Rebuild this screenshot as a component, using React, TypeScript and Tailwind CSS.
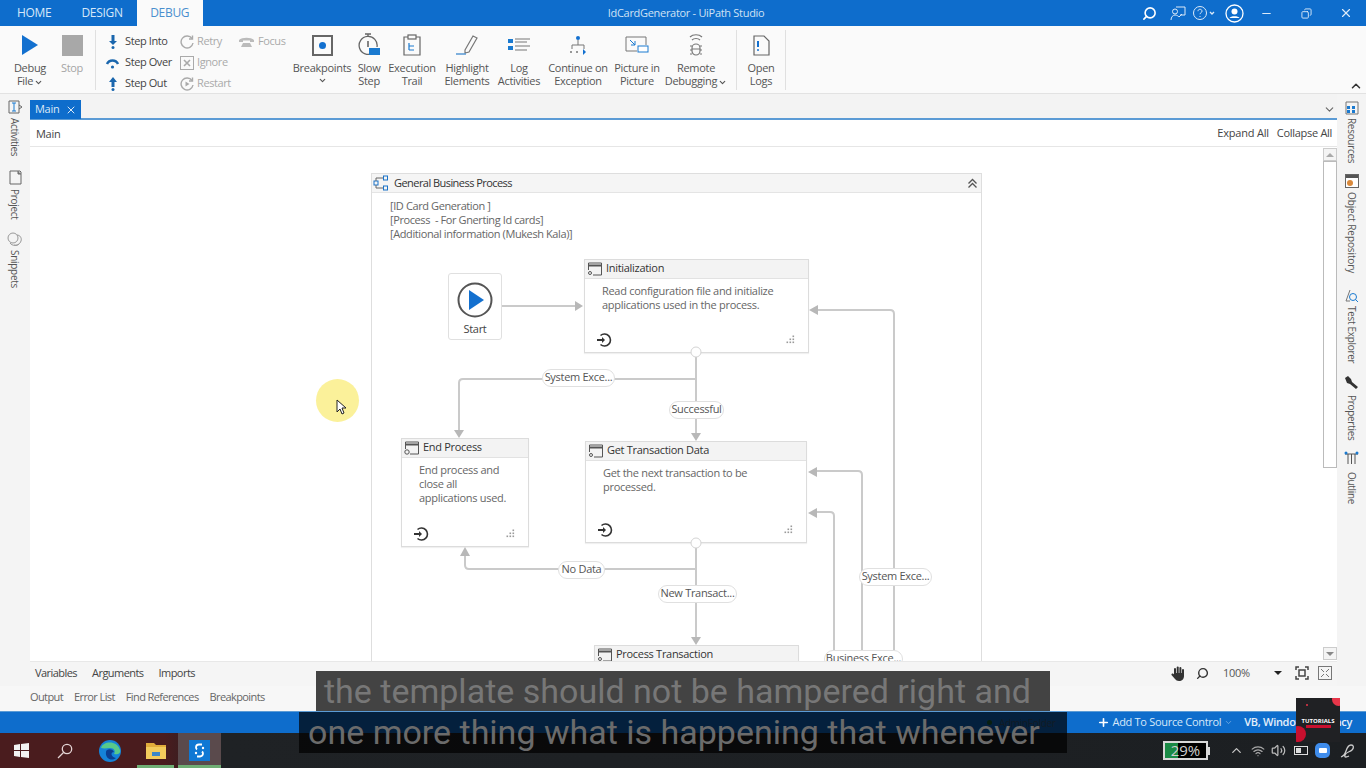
import { ChevronDown, ChevronUp, Minus, X, Plus, Search, Copy, Wifi, Volume2 } from "lucide-react";
import type { ReactNode } from "react";

const LABEL = "text-[11px] leading-[13px] text-[#555] text-center";

function BigButton({ w, icon, lines, caret, muted, caretBelow }: { w: string; icon: ReactNode; lines: string[]; caret?: boolean; muted?: boolean; caretBelow?: boolean }) {
  return (
    <div className={`${w} flex flex-col items-center shrink-0`}>
      <div className="h-[30px] w-full flex items-center justify-center">{icon}</div>
      <div className={`${LABEL} mt-[1px] ${muted ? "text-[#a5a5a5]" : ""}`}>
        {lines.map((l, i) => (
          <div key={i} className="whitespace-nowrap">
            {l}
            {caret && i === lines.length - 1 && <ChevronDown className="inline w-[9px] h-[9px] ml-[1px]" strokeWidth={3} />}
          </div>
        ))}
        {caretBelow && <ChevronDown className="mx-auto mt-[2px] w-[9px] h-[9px]" strokeWidth={3} />}
      </div>
    </div>
  );
}

function StepRow({ icon, label, muted }: { icon: ReactNode; label: string; muted?: boolean }) {
  return (
    <div className={`h-[21px] flex items-center whitespace-nowrap ${muted ? "gap-[3px]" : "gap-[5px]"}`}>
      <span className="w-[15px] h-[15px] flex items-center justify-center shrink-0">{icon}</span>
      <span className={`text-[11px] tracking-[-0.4px] ${muted ? "text-[#aaa]" : "text-[#444]"}`}>{label}</span>
    </div>
  );
}

function RailItem({ icon, label, className, gap }: { icon: ReactNode; label: string; className: string; gap: string }) {
  return (
    <div className={`flex flex-col items-center shrink-0 ${className}`}>
      {icon}
      <span className={`[writing-mode:vertical-rl] text-[10px] leading-[12px] text-[#555] ${gap} whitespace-nowrap`}>{label}</span>
    </div>
  );
}

function StateIcon({ dot }: { dot?: "key" | "ring" }) {
  return (
    <svg width="16" height="14" viewBox="0 0 16 14" fill="none" stroke="#555" className="shrink-0">
      <path d="M1.5 8V1h13v12H6" />
      <path d="M1 3.5h14" strokeWidth="2" />
      <circle cx="3" cy="11" r={dot === "ring" ? 2.2 : 1.5} />
    </svg>
  );
}

function EntryIcon() {
  return (
    <svg width="18" height="16" viewBox="0 0 18 16" fill="none" stroke="#333" strokeWidth="1.6">
      <path d="M4.5 3.5a6 6 0 1 1 0 9" />
      <path d="M1 8h6" strokeWidth="2" />
      <path d="M6 5l3 3-3 3z" fill="#333" stroke="none" />
    </svg>
  );
}

function GripIcon() {
  return (
    <svg width="10" height="10" viewBox="0 0 10 10" fill="#9a9a9a">
      <rect x="7.5" y="0.5" width="1.6" height="1.6" />
      <rect x="7.5" y="3.5" width="1.6" height="1.6" />
      <rect x="4.5" y="3.5" width="1.6" height="1.6" />
      <rect x="7.5" y="6.5" width="1.6" height="1.6" />
      <rect x="4.5" y="6.5" width="1.6" height="1.6" />
      <rect x="1.5" y="6.5" width="1.6" height="1.6" />
    </svg>
  );
}

function StateNode({ className, title, desc, dot }: { className: string; title: string; desc?: string[]; dot?: "key" | "ring" }) {
  return (
    <div className={`absolute bg-white border border-[#dcdcdc] shadow-[0_1px_1px_rgba(0,0,0,0.06)] flex flex-col ${className}`}>
      <div className="h-[19px] shrink-0 bg-[#f3f3f3] border-b border-[#e2e2e2] flex items-center gap-[3px] px-[2px] pb-[1px]">
        <StateIcon dot={dot} />
        <span className="text-[11px] text-[#333] whitespace-nowrap">{title}</span>
      </div>
      {desc && (
        <>
          <div className="pt-[5px] pl-[17px] text-[11px] leading-[14px] text-[#666]">
            {desc.map((d) => (
              <div key={d} className="whitespace-nowrap">{d}</div>
            ))}
          </div>
          <div className="mt-auto flex items-center justify-between pl-[11px] pr-[13px] pb-[4px]">
            <EntryIcon />
            <GripIcon />
          </div>
        </>
      )}
    </div>
  );
}

function Pill({ className, label }: { className: string; label: string }) {
  return (
    <div className={`absolute h-[18px] pb-[1px] bg-white border border-[#e0e0e0] rounded-full flex items-center justify-center text-[11px] text-[#555] whitespace-nowrap ${className}`}>
      {label}
    </div>
  );
}

function Connectors() {
  // coordinates are relative to the General Business Process box
  const c = "#cacaca";
  return (
    <svg className="absolute left-0 top-0 w-[610px] h-[490px]" viewBox="0 0 610 490" fill="none">
      <g stroke={c} strokeWidth="2">
        <path d="M131 133H205" />
        <path d="M325 184V262" />
        <path d="M325 206H92q-4 0-4 4V258" />
        <path d="M523 490V141q0-4-4-4H446" />
        <path d="M491 490V302q0-4-4-4H446" />
        <path d="M463 490V343q0-4-4-4H446" />
        <path d="M325 375V466" />
        <path d="M325 396H98q-4 0-4-4V382" />
      </g>
      <g fill="#b8b8b8">
        <path d="M204 128l8 5-8 5z" />
        <path d="M320 260h10l-5 8z" />
        <path d="M83 257h10l-5 8z" />
        <path d="M320 464h10l-5 8z" />
        <path d="M89 383h10l-5-9z" />
        <path d="M447 132l-9 5 9 5z" />
        <path d="M446 294l-9 5 9 5z" />
        <path d="M446 335l-9 5 9 5z" />
      </g>
      <circle cx="325" cy="179" r="5" fill="#fff" stroke="#d4d4d4" />
      <circle cx="325" cy="370" r="5" fill="#fff" stroke="#d4d4d4" />
    </svg>
  );
}

function Diagram() {
  return (
    <div className="relative ml-[341px] mt-[26px] w-[611px] h-[600px] bg-white border border-[#dedede]">
      <div className="h-[19px] bg-[#f5f5f5] border-b border-[#e4e4e4] flex items-center pl-[1px] pr-[3px]">
        <svg width="17" height="16" viewBox="0 0 17 16" fill="none" className="mr-[4px]">
          <rect x="1" y="6" width="4" height="4" stroke="#1a72c8" />
          <rect x="10.5" y="1" width="4" height="4" stroke="#1a72c8" />
          <rect x="10.5" y="11" width="4" height="4" stroke="#1a72c8" />
          <path d="M3 6V3h7M3 10v3h7" stroke="#666" />
        </svg>
        <span className="text-[11px] tracking-[-0.55px] text-[#333]">General Business Process</span>
        <svg width="11" height="11" viewBox="0 0 11 11" fill="none" stroke="#555" strokeWidth="1.3" className="ml-auto">
          <path d="M1.5 5.5l4-4 4 4M1.5 9.5l4-4 4 4" />
        </svg>
      </div>
      <div className="pl-[18px] pt-[6px] text-[11px] leading-[14px] tracking-[-0.4px] text-[#666]">
        <div>[ID Card Generation ]</div>
        <div>[Process&nbsp; - For Gnerting Id cards]</div>
        <div>[Additional information (Mukesh Kala)]</div>
      </div>
      <div className="absolute -left-px -top-px">
        <div className="absolute left-[77px] top-[100px] w-[54px] h-[67px] bg-white border border-[#e0e0e0] rounded-[3px] flex flex-col items-center pt-[8px]">
          <svg width="36" height="36" viewBox="0 0 36 36">
            <circle cx="18" cy="18" r="16.5" fill="#fff" stroke="#555" strokeWidth="2" />
            <path d="M12 8l15 10-15 10z" fill="#1370cf" />
          </svg>
          <span className="text-[11px] text-[#444] mt-[3px]">Start</span>
        </div>
        <StateNode className="left-[213px] top-[86px] w-[225px] h-[94px]" title="Initialization" desc={["Read configuration file and initialize", "applications used in the process."]} />
        <StateNode className="left-[30px] top-[265px] w-[128px] h-[109px]" title="End Process" dot="ring" desc={["End process and", "close all", "applications used."]} />
        <StateNode className="left-[214px] top-[268px] w-[222px] h-[102px]" title="Get Transaction Data" desc={["Get the next transaction to be", "processed."]} />
        <StateNode className="left-[223px] top-[472px] w-[205px] h-[60px]" title="Process Transaction" />
        <Connectors />
        <Pill className="left-[171px] top-[196px] w-[73px]" label="System Exce..." />
        <Pill className="left-[298px] top-[228px] w-[55px]" label="Successful" />
        <Pill className="left-[187px] top-[388px] w-[47px]" label="No Data" />
        <Pill className="left-[287px] top-[412px] w-[79px]" label="New Transact..." />
        <Pill className="left-[488px] top-[395px] w-[73px]" label="System Exce..." />
        <Pill className="left-[453px] top-[477px] w-[79px]" label="Business Exce..." />
      </div>
    </div>
  );
}

function TrayBattery() {
  return (
    <div className="flex items-center mr-[19px]">
      <div className="relative w-[45px] h-[19px] border-2 border-[#d8d8d8] bg-black flex items-center justify-center">
        <div className="absolute left-0 top-0 bottom-0 w-[13px] bg-[#1a8a45]" />
        <span className="relative text-[15px] leading-none tracking-normal text-[#cfcfcf]">29%</span>
      </div>
      <div className="w-[2px] h-[8px] bg-[#d8d8d8]" />
    </div>
  );
}

export default function App() {
  return (
    <div className="relative w-[1366px] h-[768px] overflow-hidden flex flex-col bg-[#f5f5f5] font-['Open_Sans',sans-serif] tracking-[-0.3px]">
      {/* title bar */}
      <div className="h-[26px] shrink-0 bg-[#0e6dcc] flex items-stretch relative">
        <div className="flex items-center text-[12px] text-[#d6e8f9] pl-[17px]">
          <span>HOME</span>
          <span className="ml-[30px]">DESIGN</span>
        </div>
        <div className="ml-[14px] w-[66px] bg-[#fafafa] flex items-center justify-center text-[12px] text-[#4a8fce]">DEBUG</div>
        <div className="ml-[405px] flex items-center text-[11px] text-[#cfe2f5] whitespace-nowrap">IdCardGenerator - UiPath Studio</div>
        <div className="ml-auto flex items-center text-white">
          <Search className="w-[15px] h-[15px] -scale-x-100" strokeWidth={2.6} />
          <svg width="16" height="16" viewBox="0 0 16 16" fill="none" stroke="#dceaf8" className="ml-[13px]">
            <path d="M6 2h9v8H10" />
            <circle cx="5" cy="6.5" r="2.5" />
            <path d="M1 15c0-3 2-5 4-5s3 1 4 2l3-3" />
          </svg>
          <svg width="24" height="16" viewBox="0 0 24 16" fill="none" stroke="#dceaf8" className="ml-[6px]">
            <circle cx="8" cy="8" r="6.5" />
            <path d="M6 6.2c0-2.6 4-2.6 4 0 0 1.5-2 1.5-2 3M8 11v1" />
            <path d="M18 7l2 2 2-2" strokeWidth="1.3" />
          </svg>
          <svg width="19" height="19" viewBox="0 0 19 19" fill="none" className="ml-[9px]">
            <circle cx="9.5" cy="9.5" r="8.5" stroke="#fff" strokeWidth="1.3" />
            <circle cx="9.5" cy="7.5" r="3" fill="#fff" />
            <path d="M4.5 14c1-2.4 9-2.4 10 0z" fill="#fff" />
          </svg>
          <Minus className="w-[13px] h-[13px] ml-[16px] text-[#dceaf8]" />
          <Copy className="w-[11px] h-[11px] ml-[28px] text-[#dceaf8] -scale-x-100" />
          <X className="w-[14px] h-[14px] ml-[27px] mr-[13px] text-[#dceaf8]" />
        </div>
      </div>

      {/* ribbon */}
      <div className="h-[68px] shrink-0 bg-[#fafafa] border-b border-[#e2e2e2] flex items-start pt-[4px]">
        <BigButton w="w-[44px] ml-[8px]" lines={["Debug", "File"]} caret icon={
          <svg width="18" height="20" viewBox="0 0 18 20"><path d="M1 0l16 10L1 20z" fill="#1370cf" /></svg>
        } />
        <BigButton w="w-[36px] ml-[2px]" lines={["Stop"]} muted icon={<div className="w-[21px] h-[21px] bg-[#a8a8a8]" />} />
        <div className="w-px h-[60px] bg-[#e0e0e0] ml-[5px]" />
        <div className="ml-[9px] w-[74px] flex flex-col pt-[1px]">
          <StepRow label="Step Into" icon={<svg width="10" height="14" viewBox="0 0 10 14" fill="#1a66ad"><path d="M3.5 0h3v6H9L5 10 1 6h2.5z" /><circle cx="5" cy="12.5" r="1.5" /></svg>} />
          <StepRow label="Step Over" icon={<svg width="15" height="12" viewBox="0 0 15 12" fill="none"><path d="M2 7a6 6 0 0 1 11 0" stroke="#1a66ad" strokeWidth="2.5" /><circle cx="7.5" cy="10" r="1.6" fill="#1a66ad" /></svg>} />
          <StepRow label="Step Out" icon={<svg width="10" height="14" viewBox="0 0 10 14" fill="#1a66ad"><path d="M3.5 10h3V5H9L5 0 1 5h2.5z" /><circle cx="5" cy="12.5" r="1.5" /></svg>} />
        </div>
        <div className="w-[60px] flex flex-col pt-[1px]">
          <StepRow muted label="Retry" icon={<svg width="14" height="14" viewBox="0 0 14 14" fill="none" stroke="#aaa" strokeWidth="1.4"><path d="M12 3.5A6 6 0 1 0 13 8" /><path d="M12.5 0.5v3.5H9" /></svg>} />
          <StepRow muted label="Ignore" icon={<svg width="14" height="14" viewBox="0 0 14 14" fill="none" stroke="#aaa"><rect x="0.5" y="0.5" width="13" height="13" /><path d="M4 4l6 6M10 4l-6 6" strokeWidth="1.6" /></svg>} />
          <StepRow muted label="Restart" icon={<svg width="14" height="14" viewBox="0 0 14 14" fill="none" stroke="#aaa" strokeWidth="1.4"><path d="M12 3.5A6 6 0 1 0 13 8" /><path d="M12.5 0.5v3.5H9" /><path d="M5.5 4.5l4 2.5-4 2.5z" fill="#aaa" stroke="none" /></svg>} />
        </div>
        <div className="w-[53px] flex flex-col pt-[1px]">
          <div className="h-[21px] flex items-center gap-[4px]">
            <svg width="15" height="10" viewBox="0 0 15 10" fill="#bbb"><path d="M0 3c3-3 12-3 15 0v2h-4V3.500H4V5H0z" /><path d="M4 6h7l2 4H2z" /></svg>
            <span className="text-[11px] tracking-[-0.4px] text-[#aaa]">Focus</span>
          </div>
        </div>
        <BigButton w="w-[60px]" lines={["Breakpoints"]} caretBelow icon={
          <div className="w-[21px] h-[21px] border-2 border-[#666] flex items-center justify-center"><div className="w-[7px] h-[7px] rounded-full bg-[#1370cf]" /></div>
        } />
        <BigButton w="w-[34px]" lines={["Slow", "Step"]} icon={
          <svg width="22" height="24" viewBox="0 0 22 24" fill="none" stroke="#666" strokeWidth="1.3">
            <path d="M7 1h6M10 1v3" />
            <path d="M15 20A9 9 0 1 1 19 14" />
            <path d="M10 8v6" stroke="#444" />
            <rect x="11" y="15" width="11" height="7" fill="#1a7ad0" stroke="none" />
          </svg>
        } />
        <BigButton w="w-[52px]" lines={["Execution", "Trail"]} icon={
          <svg width="18" height="22" viewBox="0 0 18 22" fill="none" stroke="#666" strokeWidth="1.2">
            <path d="M5 3H1v18h16V3h-4" />
            <rect x="5" y="1" width="8" height="4" />
            <path d="M6 9v7M6 12h5M6 16h5" stroke="#1a7ad0" />
          </svg>
        } />
        <BigButton w="w-[58px]" lines={["Highlight", "Elements"]} icon={
          <svg width="24" height="24" viewBox="0 0 24 24" fill="none" stroke="#777" strokeWidth="1.2">
            <path d="M10 17l8-14 4 2-8 14-4 1z" />
            <path d="M1 21h10" stroke="#4a90d0" strokeWidth="1.4" />
          </svg>
        } />
        <BigButton w="w-[46px]" lines={["Log", "Activities"]} icon={
          <svg width="22" height="16" viewBox="0 0 22 16">
            <rect x="0" y="2" width="5" height="4" fill="#1a7ad0" />
            <rect x="0" y="9" width="5" height="4" fill="#1a7ad0" />
            <path d="M7 2h15M7 5h12M7 9h15M7 13h12" stroke="#777" strokeWidth="1.2" />
          </svg>
        } />
        <BigButton w="w-[72px]" lines={["Continue on", "Exception"]} icon={
          <svg width="18" height="20" viewBox="0 0 18 20" fill="none" stroke="#777">
            <circle cx="9" cy="3" r="2" fill="#1370cf" stroke="none" />
            <path d="M9 5v5M3 14v-4h12v4" />
            <path d="M1 17h2M7 17h2" strokeWidth="1.5" />
            <path d="M14 14l3 3-3 3z" fill="#1370cf" stroke="none" />
          </svg>
        } />
        <BigButton w="w-[46px]" lines={["Picture in", "Picture"]} icon={
          <svg width="24" height="20" viewBox="0 0 24 20" fill="none" stroke="#777">
            <path d="M12 16H1V2h20v8" />
            <path d="M5 5l5 5M10 6v4H6" stroke="#1a7ad0" />
            <rect x="13" y="11" width="10" height="6" fill="#fff" stroke="#1a7ad0" />
          </svg>
        } />
        <BigButton w="w-[72px]" lines={["Remote", "Debugging"]} caret icon={
          <svg width="18" height="24" viewBox="0 0 18 24" fill="none" stroke="#777" strokeWidth="1.2">
            <path d="M3 4c3-3 9-3 12 0M5 7c2-2 6-2 8 0" />
            <rect x="5" y="11" width="8" height="11" rx="4" />
            <path d="M3 13h2M13 13h2M3 17h2M13 17h2M3 21h2M13 21h2M5 16h8" />
          </svg>
        } />
        <div className="w-px h-[60px] bg-[#e0e0e0] ml-[4px]" />
        <BigButton w="w-[48px]" lines={["Open", "Logs"]} icon={
          <svg width="17" height="21" viewBox="0 0 17 21" fill="none" stroke="#666" strokeWidth="1.2">
            <path d="M1 1h10l5 5v14H1z" />
            <path d="M5 6v6" stroke="#1370cf" strokeWidth="2" />
            <circle cx="5" cy="15" r="1" fill="#1370cf" stroke="none" />
          </svg>
        } />
        <div className="w-px h-[60px] bg-[#e0e0e0]" />
        <div className="ml-auto self-end mr-[3px] mb-[0px]">
          <ChevronUp className="w-[14px] h-[14px] text-[#333]" strokeWidth={2.6} />
        </div>
      </div>

      {/* body */}
      <div className="flex-1 min-h-0 flex">
        <div className="w-[30px] shrink-0 bg-[#f4f4f4] flex flex-col items-center pt-[6px]">
          <RailItem className="h-[70px]" gap="mt-[4px]" label="Activities" icon={
            <svg width="15" height="14" viewBox="0 0 15 14" fill="none" stroke="#666"><path d="M1 1h10v12H1z" /><path d="M11 5l3 2-3 2" /><path d="M4 3h4M4 11h4M6 3v8" stroke="#1a7ad0" /></svg>
          } />
          <RailItem className="h-[62px]" gap="mt-[4px]" label="Project" icon={
            <svg width="13" height="15" viewBox="0 0 13 15" fill="none" stroke="#666"><path d="M1 1h10l1 1v12H1z" /><path d="M9 1v3h3" fill="#888" /></svg>
          } />
          <RailItem className="h-[60px]" gap="mt-[3px]" label="Snippets" icon={
            <svg width="16" height="15" viewBox="0 0 16 15" fill="none" stroke="#999"><circle cx="6" cy="6" r="5" /><path d="M10 3c3 0 5 3 4 6s-4 5-7 4" /><path d="M3 11c2 3 7 3 9 1" /></svg>
          } />
        </div>

        <div className="flex-1 min-w-0 flex flex-col">
          <div className="h-[26px] shrink-0 bg-[#f3f3f3] border-b-2 border-[#5b9bd5] flex items-end relative">
            <div className="h-[19px] w-[51px] bg-[#0e6dcc] flex items-center justify-between pl-[5px] pr-[4px] text-[11px] text-[#dce9f6] mb-[-1px]">
              Main <X className="w-[12px] h-[12px]" />
            </div>
            <ChevronDown className="absolute right-[1px] top-[9px] w-[13px] h-[13px] text-[#666]" />
          </div>
          <div className="h-[27px] shrink-0 bg-white border-b border-[#e6e6e6] flex items-center px-[6px] pt-[2px] text-[11px] text-[#444]">
            <span>Main</span>
            <span className="ml-auto tracking-[-0.2px] -mt-[2px]">Expand All</span>
            <span className="ml-[8px] mr-[-1px] -mt-[2px]">Collapse All</span>
          </div>
          <div className="flex-1 min-h-0 flex bg-white">
            <div className="flex-1 min-w-0 overflow-hidden relative">
              <Diagram />
            </div>
            <div className="w-[15px] shrink-0 flex flex-col items-center pt-[1px] bg-white">
              <div className="w-[14px] h-[13px] border border-[#ccc] bg-[#f4f4f4] flex items-center justify-center"><div className="w-0 h-0 border-x-[4px] border-x-transparent border-b-[4px] border-b-[#aaa]" /></div>
              <div className="w-[14px] h-[307px] border border-[#bbb] bg-white" />
              <div className="w-[14px] h-[13px] border border-[#ccc] bg-[#f4f4f4] mt-auto mb-[1px] flex items-center justify-center"><div className="w-0 h-0 border-x-[4px] border-x-transparent border-t-[4px] border-t-[#888]" /></div>
            </div>
          </div>
          <div className="h-[25px] shrink-0 bg-[#f5f5f5] flex items-center pl-[5px] pr-[5px] pb-[2px] text-[11px] tracking-[-0.55px] text-[#444] border-t border-[#e8e8e8]">
            <span>Variables</span>
            <span className="ml-[15px]">Arguments</span>
            <span className="ml-[15px]">Imports</span>
            <svg width="15" height="15" viewBox="0 0 15 15" fill="#333" className="ml-auto">
              <rect x="3" y="2" width="2" height="8" rx="1" />
              <rect x="5.700" y="0.500" width="2" height="8" rx="1" />
              <rect x="8.400" y="1" width="2" height="8" rx="1" />
              <rect x="11" y="3" width="2" height="7" rx="1" />
              <path d="M3 7h10v3c0 3-2 5-5 5-2 0-3-1-4-2L0.500 9c-.5-1 1-2 2-1L4 9z" />
            </svg>
            <Search className="ml-[10px] w-[13px] h-[13px] text-[#333] -scale-x-100" strokeWidth={2.6} />
            <span className="ml-[14px] w-[30px] text-[#555] tracking-[-0.3px]">100%</span>
            <div className="ml-[21px] w-0 h-0 border-x-[4px] border-x-transparent border-t-[4px] border-t-[#222]" />
            <svg width="14" height="14" viewBox="0 0 14 14" className="ml-[13px]" fill="none" stroke="#444" strokeWidth="1.5"><path d="M1 4V1h3M10 1h3v3M13 10v3h-3M4 13H1v-3" /><rect x="4" y="4" width="6" height="6" /></svg>
            <svg width="14" height="14" viewBox="0 0 14 14" className="ml-[9px]" fill="none" stroke="#777"><rect x="0.5" y="0.5" width="13" height="13" /><path d="M3 3l3 3M11 3L8 6M3 11l3-3M11 11L8 8" /></svg>
          </div>
        </div>

        <div className="w-[29px] shrink-0 bg-[#f4f4f4] flex flex-col items-center pt-[7px]">
          <RailItem className="h-[73px]" gap="mt-[3px]" label="Resources" icon={
            <svg width="14" height="14" viewBox="0 0 14 14" fill="none" stroke="#777"><path d="M1 1h12v12H1z" /><rect x="2" y="5" width="3" height="3" fill="#1a7ad0" stroke="none" /><rect x="7" y="5" width="3" height="3" fill="#1a7ad0" stroke="none" /><rect x="2" y="9" width="3" height="3" fill="#1a7ad0" stroke="none" /><rect x="7" y="9" width="3" height="3" fill="#1a7ad0" stroke="none" /></svg>
          } />
          <RailItem className="h-[115px]" gap="mt-[4px] tracking-[-0.1px]" label="Object Repository" icon={
            <svg width="14" height="14" viewBox="0 0 14 14"><rect x="0.5" y="0.500" width="13" height="13" fill="#fff" stroke="#666" /><rect x="1" y="1" width="12" height="3" fill="#555" /><circle cx="5" cy="9" r="3" fill="#d9893b" /></svg>
          } />
          <RailItem className="h-[86px]" gap="mt-[3px]" label="Test Explorer" icon={
            <svg width="14" height="14" viewBox="0 0 14 14" fill="none" stroke="#1a7ad0"><path d="M5 1L1 12h4" stroke="#777" /><circle cx="8" cy="8" r="3.5" /><path d="M10.500 10.500L13 13" /></svg>
          } />
          <RailItem className="h-[76px]" gap="mt-[5px]" label="Properties" icon={
            <svg width="15" height="15" viewBox="0 0 15 15"><path d="M1 3l3-2 3 3 1 3 6 5-2 2-6-5-3-1z" fill="#333" /></svg>
          } />
          <RailItem className="h-[60px]" gap="mt-[7px]" label="Outline" icon={
            <svg width="15" height="14" viewBox="0 0 15 14" fill="none" stroke="#555"><path d="M1 3h13M4 3v10M7.500 3v10M11 3v10" /><circle cx="2" cy="2" r="1.500" fill="#1a7ad0" stroke="none" /><circle cx="13" cy="2" r="1.500" fill="#1a7ad0" stroke="none" /></svg>
          } />
        </div>
      </div>

      {/* output tabs */}
      <div className="h-[25px] shrink-0 bg-[#f7f7f7] flex items-center pl-[30px] pb-[2px] gap-[11px] text-[11px] tracking-[-0.6px] text-[#666]">
        <span>Output</span>
        <span>Error List</span>
        <span>Find References</span>
        <span>Breakpoints</span>
      </div>

      {/* status bar */}
      <div className="h-[22px] shrink-0 bg-[#0e6dcc] border-t border-[#5b9bd5] flex items-center justify-end text-[11px] text-[#d6e8f9]">
        <Plus className="w-[13px] h-[13px] text-white" strokeWidth={3} />
        <span className="ml-[2px]">Add To Source Control</span>
        <ChevronDown className="w-[9px] h-[9px] ml-[3px] text-[#7fb2e5]" />
        <span className="ml-[11px] mr-[14px] font-semibold text-[#e4effa]">VB, Windows - Legacy</span>
      </div>

      {/* taskbar */}
      <div className="h-[35px] shrink-0 bg-[linear-gradient(90deg,#4a1c1e_0%,#4a1c1e_12%,#1f2225_16%,#1c1f22_100%)] flex items-stretch text-white">
        <div className="w-[43px] flex items-center justify-center">
          <svg width="15" height="15" viewBox="0 0 15 15" fill="#f2f2f2"><path d="M0 2l6-1v6H0zM7 1l8-1v7H7zM0 8h6v6l-6-1zM7 8h8v7l-8-1z" /></svg>
        </div>
        <div className="w-[44px] flex items-center justify-center">
          <svg width="16" height="16" viewBox="0 0 16 16" fill="none" stroke="#e4d4d4" strokeWidth="1.3"><circle cx="10" cy="6" r="4.700" /><path d="M6.500 9.500L1 15" /></svg>
        </div>
        <div className="w-[46px] flex items-center justify-center">
          <svg width="22" height="22" viewBox="0 0 22 22">
            <circle cx="11" cy="11" r="11" fill="#1583d8" />
            <path d="M2 8c2-7 16-8 19 2 1 4-3 5-6 4 2-3 0-6-4-6-3 0-5 1-9 0z" fill="#58c98a" />
            <path d="M7 12c0-3 6-4 8 0-4 0-3 5 2 6-5 4-11 0-10-6z" fill="#0b3f91" />
          </svg>
        </div>
        <div className="w-[45px] flex items-center justify-center relative">
          <svg width="20" height="17" viewBox="0 0 20 17"><path d="M0 1h8l2 2h10v3H0z" fill="#e2ac3b" /><path d="M0 5h20v12H0z" fill="#f3cb5c" /><rect x="6" y="10" width="8" height="4" fill="#3b87c9" /></svg>
          <div className="absolute left-[4px] right-[4px] bottom-0 h-[3px] bg-[#6fae74]" />
        </div>
        <div className="w-[43px] bg-[#5a4a4c] flex items-center justify-center relative">
          <svg width="21" height="21" viewBox="0 0 21 21">
            <rect width="21" height="21" fill="#0f78d4" />
            <path d="M13 4.500H10a3 3 0 0 0-3 3c0 1 .5 1.500 1 2" fill="none" stroke="#fff" strokeWidth="1.800" />
            <path d="M8 16.500h3a3 3 0 0 0 3-3c0-1-.5-1.500-1-2" fill="none" stroke="#fff" strokeWidth="1.800" />
            <circle cx="14" cy="8" r="1.200" fill="#fff" />
            <circle cx="7" cy="13" r="1.200" fill="#fff" />
          </svg>
          <div className="absolute left-0 right-0 bottom-0 h-[3px] bg-[#6fae74]" />
        </div>
        <div className="ml-auto flex items-center pr-[10px] text-[#c8c8c8]">
          <TrayBattery />
          <ChevronUp className="w-[15px] h-[15px]" />
          <Wifi className="w-[14px] h-[14px] ml-[7px] text-[#aaa]" />
          <Volume2 className="w-[15px] h-[15px] ml-[6px] text-[#bbb]" />
          <svg width="15" height="9" viewBox="0 0 15 9" className="ml-[8px]"><rect x="0.500" y="0.500" width="13" height="8" fill="none" stroke="#ddd" /><rect x="2" y="2" width="5" height="5" fill="#ddd" /></svg>
          <div className="ml-[6px] w-[15px] h-[15px] rounded-[5px] bg-[#3f8ceb] flex items-center justify-center"><div className="w-[8px] h-[5px] bg-white rounded-[1px]" /></div>
          <svg width="16" height="16" viewBox="0 0 16 16" fill="none" stroke="#ccc" strokeWidth="1.300" className="ml-[10px]"><path d="M1 14c3-1 4-3 5-6s2-6 5-6 3 3 1 5-6 2-7 5 2 2 4 1" /></svg>
        </div>
      </div>

      {/* video overlays */}
      <div className="absolute left-[999px] top-[716px] text-[10px] text-[#3a5a7a]">AdminFolder</div>
      <div className="absolute left-[987px] top-[720px] w-[5px] h-[5px] rounded-full bg-[#1c6a3a]" />
      <div className="absolute left-[316px] top-[671px] w-[734px] h-[40px] bg-[#434343] flex items-center pl-[8px] text-[34px] tracking-normal leading-none text-[#777] font-['Roboto',sans-serif] whitespace-nowrap">
        the template should not be hampered right and
      </div>
      <div className="absolute left-[299px] top-[712px] w-[768px] h-[41px] pb-[2px] bg-black/70 flex items-center pl-[9px] text-[34px] tracking-normal leading-none text-[#6b6b6b] font-['Roboto',sans-serif] whitespace-nowrap">
        one more thing what is happening that whenever
      </div>
      <div className="absolute left-[1296px] top-[698px] w-[44px] h-[44px] bg-[#202124] overflow-hidden flex flex-col items-center justify-center">
        <div className="absolute -right-[5px] -top-[5px] w-[13px] h-[13px] rounded-full bg-[#e8364a]" />
        <div className="absolute -left-[6px] bottom-[0px] w-[16px] h-[16px] rounded-full bg-[#c8102e]" />
        <div className="absolute left-[10px] top-[6px] w-[2px] h-[2px] rounded-full bg-[#e8364a]" />
        <span className="text-[6px] font-bold text-white leading-none tracking-normal mt-[5px]">TUTORIALS</span>
        <div className="w-[25px] h-[3px] bg-[#c8102e] mt-[1px]" />
      </div>
      <div className="absolute left-[316px] top-[379px] w-[43px] h-[43px] rounded-full bg-[#fbf19a]">
        <svg width="12" height="16" viewBox="0 0 12 16" className="absolute left-[20px] top-[20px]"><path d="M1 1v12l3-3 2 5 2-1-2-5h4z" fill="#fff" stroke="#222" /></svg>
      </div>
    </div>
  );
}
